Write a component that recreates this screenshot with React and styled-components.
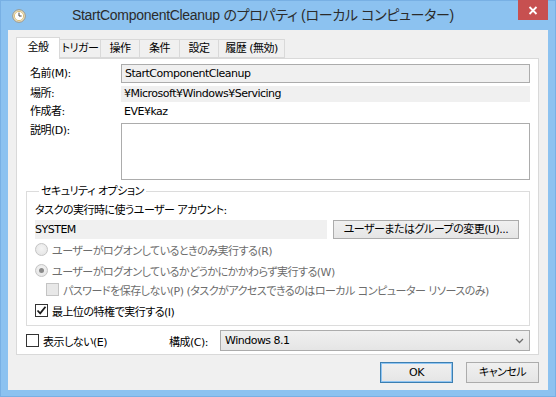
import React from 'react';
import styled, { createGlobalStyle } from 'styled-components';

const GlobalStyle = createGlobalStyle`
  html, body {
    margin: 0;
    padding: 0;
    background: #8cc2f0;
  }
  * {
    box-sizing: border-box;
  }
`;

const UI_FONT = `"DejaVu Sans", "Noto Sans CJK JP", sans-serif`;

const Window = styled.div`
  width: 556px;
  height: 397px;
  background: #8cc2f0;
  border: 1px solid #78b0e4;
  display: flex;
  flex-direction: column;
  font-family: ${UI_FONT};
  font-size: 11px;
  letter-spacing: -0.5px;
  font-feature-settings: "palt";
  color: #000;
`;

const TitleBar = styled.div`
  height: 29px;
  display: flex;
  align-items: flex-start;
  padding-left: 11px;
`;

const TitleIcon = styled.div`
  width: 14px;
  height: 14px;
  margin-top: 8px;
  flex-shrink: 0;
`;

const TitleText = styled.div`
  flex: 1;
  text-align: center;
  font-family: "Liberation Sans", "Noto Sans CJK JP", sans-serif;
  font-size: 14px;
  letter-spacing: -0.3px;
  line-height: 29px;
  color: #2b2b2b;
  padding-right: 18px;
  white-space: nowrap;
`;

const CloseButton = styled.div`
  width: 30px;
  height: 20px;
  margin-top: -1px;
  margin-right: 7px;
  background: #c75050;
  display: flex;
  align-items: center;
  justify-content: center;
`;

const Client = styled.div`
  flex: 1;
  margin: 0 7px 7px 7px;
  background: #f0f0f0;
  display: flex;
  flex-direction: column;
  padding: 7px 9px 7px 8px;
`;

const TabStrip = styled.div`
  display: flex;
  align-items: flex-end;
  height: 21px;
  position: relative;
  z-index: 1;
`;

const Tab = styled.div`
  width: ${p => p.$w}px;
  height: ${p => (p.$active ? '22px' : '19px')};
  background: ${p => (p.$active ? '#ffffff' : '#f0f0f0')};
  border: 1px solid #d9d9d9;
  border-bottom: ${p => (p.$active ? 'none' : '1px solid #d9d9d9')};
  margin-left: ${p => (p.$first ? '0' : '-1px')};
  margin-bottom: ${p => (p.$active ? '-1px' : '0')};
  line-height: ${p => (p.$active ? '19px' : '17px')};
  text-align: center;
  white-space: nowrap;
  color: #000;
`;

const Panel = styled.div`
  flex: 1;
  background: #fff;
  border: 1px solid #d9d9d9;
  padding: 5px 8px 3px 9px;
  display: flex;
  flex-direction: column;
`;

const FieldGrid = styled.div`
  display: grid;
  grid-template-columns: 91px 1fr;
  padding-left: 4px;
`;

const FieldLabel = styled.div`
  line-height: ${p => p.$h || 15}px;
  margin-top: ${p => p.$mt || 0}px;
  white-space: nowrap;
`;

const ReadBox = styled.div`
  height: ${p => p.$h}px;
  margin-top: ${p => p.$mt || 0}px;
  background: ${p => (p.$white ? '#fff' : p.$plain ? 'transparent' : '#f0f0f0')};
  border: ${p => (p.$border ? '1px solid #acacac' : 'none')};
  padding-left: 3px;
  line-height: ${p => (p.$border ? p.$h - 2 : p.$h)}px;
  white-space: nowrap;
`;

const Group = styled.fieldset`
  margin: 4px 0 0 0;
  padding: 0 10px 7px 8px;
  border: 1px solid #dcdcdc;
  border-radius: 0;
  min-width: 0;
`;

const Legend = styled.legend`
  padding: 0 2px;
  margin-left: 4px;
  line-height: 15px;
`;

const PlainLine = styled.div`
  line-height: 15px;
  margin-top: 4px;
`;

const AccountRow = styled.div`
  display: flex;
  gap: 6px;
  margin-top: 2px;
  height: 19px;
`;

const AccountBox = styled.div`
  flex: 1;
  background: #f0f0f0;
  line-height: 19px;
`;

const PushButton = styled.div`
  width: ${p => p.$w}px;
  height: ${p => p.$h || 19}px;
  border: 1px solid ${p => (p.$default ? '#3c7fb1' : '#acacac')};
  box-shadow: ${p => (p.$default ? 'inset 0 0 0 1px #8fc5f3' : 'none')};
  background: linear-gradient(#f0f0f0, #e5e5e5);
  text-align: center;
  line-height: ${p => (p.$h || 19) - 2}px;
  white-space: nowrap;
  color: #000;
`;

const OptionRow = styled.div`
  display: flex;
  align-items: center;
  gap: 4px;
  height: 15px;
  margin-top: ${p => p.$mt || 0}px;
  margin-left: ${p => p.$indent || 0}px;
  color: ${p => (p.$disabled ? '#6d6d6d' : '#000')};
  white-space: nowrap;
`;

const RadioCircle = styled.span`
  width: 13px;
  height: 13px;
  border-radius: 50%;
  border: 1px solid #c4c4c4;
  background: radial-gradient(circle at 50% 40%, #f4f4f4, #e2e2e2);
  display: flex;
  align-items: center;
  justify-content: center;
  flex-shrink: 0;

  &::after {
    content: '';
    display: ${p => (p.$checked ? 'block' : 'none')};
    width: 5px;
    height: 5px;
    border-radius: 50%;
    background: #8a8a8a;
  }
`;

const CheckSquare = styled.span`
  width: 13px;
  height: 13px;
  border: 1px solid ${p => (p.$disabled ? '#c4c4c4' : '#333')};
  background: ${p => (p.$disabled ? '#e8e8e8' : '#fff')};
  display: flex;
  align-items: center;
  justify-content: center;
  flex-shrink: 0;
`;

const BottomRow = styled.div`
  display: flex;
  align-items: center;
  margin-top: 4px;
  height: 21px;
`;

const ConfigLabel = styled.span`
  margin-left: auto;
  margin-right: 12px;
`;

const Select = styled.div`
  width: 310px;
  height: 21px;
  border: 1px solid #acacac;
  background: linear-gradient(#f0f0f0, #e5e5e5);
  display: flex;
  align-items: center;
  justify-content: space-between;
  padding: 0 5px 0 4px;
`;

const ButtonRow = styled.div`
  display: flex;
  justify-content: flex-end;
  gap: 13px;
  margin-top: 7px;
`;

const ClockIcon = () => (
  <svg width="14" height="14" viewBox="0 0 14 14">
    <circle cx="7" cy="7" r="6.3" fill="#e9e4d4" stroke="#9b9077" strokeWidth="0.9" />
    <circle cx="7" cy="7" r="4.6" fill="#ffffff" stroke="#d8b65a" strokeWidth="0.8" />
    <path d="M7 3.6 V7 H9.6" fill="none" stroke="#444" strokeWidth="1" />
  </svg>
);

const CloseGlyph = () => (
  <svg width="10" height="9" viewBox="0 0 10 9">
    <path d="M1.5 1 L8.5 8 M8.5 1 L1.5 8" stroke="#fff" strokeWidth="1.8" />
  </svg>
);

const CheckMark = () => (
  <svg width="11" height="11" viewBox="0 0 11 11">
    <path d="M1.5 5.5 L4.2 8.3 L9.5 1.8" fill="none" stroke="#1b1b1b" strokeWidth="1.8" />
  </svg>
);

const Chevron = () => (
  <svg width="9" height="6" viewBox="0 0 9 6">
    <path d="M1 1 L4.5 4.5 L8 1" fill="none" stroke="#6d6d6d" strokeWidth="1.3" />
  </svg>
);

const tabs = [
  { label: '全般', w: 44 },
  { label: 'トリガー', w: 42 },
  { label: '操作', w: 40 },
  { label: '条件', w: 41 },
  { label: '設定', w: 40 },
  { label: '履歴 (無効)', w: 67 },
];

export default function App() {
  return (
    <>
      <GlobalStyle />
      <Window>
        <TitleBar>
          <TitleIcon>
            <ClockIcon />
          </TitleIcon>
          <TitleText>StartComponentCleanup のプロパティ (ローカル コンピューター)</TitleText>
          <CloseButton>
            <CloseGlyph />
          </CloseButton>
        </TitleBar>

        <Client>
          <TabStrip>
            {tabs.map((t, i) => (
              <Tab key={t.label} $w={t.w} $active={i === 0} $first={i === 0}>
                {t.label}
              </Tab>
            ))}
          </TabStrip>

          <Panel>
            <FieldGrid>
              <FieldLabel $h={19}>名前(M):</FieldLabel>
              <ReadBox $h={19} $border>StartComponentCleanup</ReadBox>

              <FieldLabel $h={16} $mt={3}>場所:</FieldLabel>
              <ReadBox $h={16} $mt={3}>¥Microsoft¥Windows¥Servicing</ReadBox>

              <FieldLabel $h={15} $mt={2}>作成者:</FieldLabel>
              <ReadBox $h={15} $mt={2} $plain>EVE¥kaz</ReadBox>

              <FieldLabel $h={15} $mt={4}>説明(D):</FieldLabel>
              <ReadBox $h={57} $mt={4} $border $white />
            </FieldGrid>

            <Group>
              <Legend>セキュリティ オプション</Legend>
              <PlainLine>タスクの実行時に使うユーザー アカウント:</PlainLine>
              <AccountRow>
                <AccountBox>SYSTEM</AccountBox>
                <PushButton $w={186}>ユーザーまたはグループの変更(U)...</PushButton>
              </AccountRow>

              <OptionRow $mt={3} $disabled>
                <RadioCircle />
                ユーザーがログオンしているときのみ実行する(R)
              </OptionRow>
              <OptionRow $mt={6} $disabled>
                <RadioCircle $checked />
                ユーザーがログオンしているかどうかにかかわらず実行する(W)
              </OptionRow>
              <OptionRow $mt={4} $indent={11} $disabled>
                <CheckSquare $disabled />
                パスワードを保存しない(P) (タスクがアクセスできるのはローカル コンピューター リソースのみ)
              </OptionRow>
              <OptionRow $mt={6}>
                <CheckSquare>
                  <CheckMark />
                </CheckSquare>
                最上位の特権で実行する(I)
              </OptionRow>
            </Group>

            <BottomRow>
              <OptionRow>
                <CheckSquare />
                表示しない(E)
              </OptionRow>
              <ConfigLabel>構成(C):</ConfigLabel>
              <Select>
                <span>Windows 8.1</span>
                <Chevron />
              </Select>
            </BottomRow>
          </Panel>

          <ButtonRow>
            <PushButton $w={73} $h={21} $default>OK</PushButton>
            <PushButton $w={73} $h={21}>キャンセル</PushButton>
          </ButtonRow>
        </Client>
      </Window>
    </>
  );
}
